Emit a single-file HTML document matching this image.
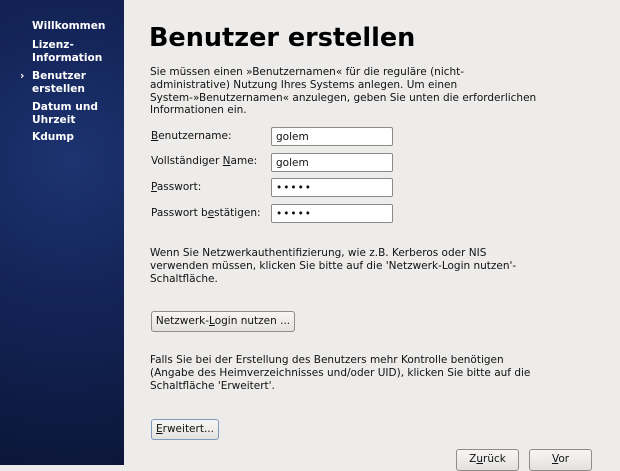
<!DOCTYPE html>
<html><head><meta charset="utf-8"><style>
body{margin:0;width:620px;height:465px;overflow:hidden;background:#edeceb;font-family:"DejaVu Sans","Liberation Sans",sans-serif;font-size:10.5px;color:#111;position:relative}
.sb{position:absolute;left:0;top:0;width:124px;height:465px;background:radial-gradient(circle at 70px 160px,#1d3470 0,#14255a 40%,#0b1638 100%)}
.sb div{position:absolute;left:32px;color:#fff;font-weight:bold;font-size:10.6px;line-height:12.5px;white-space:nowrap}
.a{position:absolute;white-space:nowrap}
.p{position:absolute;left:150px;line-height:12.8px;white-space:nowrap}
.in{position:absolute;left:271px;width:122px;border:1px solid #8a8a88;border-radius:2px;background:#fff;box-sizing:border-box;padding:3px 4px}
.btn{position:absolute;border:1px solid #8e8d8a;border-radius:3px;background:linear-gradient(#f7f6f5,#e4e2df);box-sizing:border-box;text-align:center;line-height:19px}
u{text-decoration:underline}
</style></head><body>
<div class="sb">
<div style="top:20px">Willkommen</div>
<div style="top:39px">Lizenz-<br>Information</div>
<div style="top:70px">Benutzer<br>erstellen</div>
<div style="top:70px;left:20px">›</div>
<div style="top:101px">Datum und<br>Uhrzeit</div>
<div style="top:131px">Kdump</div>
</div>
<div class="a" style="left:149px;top:23px;font-size:25.5px;font-weight:bold;color:#000">Benutzer erstellen</div>
<div class="p" style="top:66px">Sie müssen einen »Benutzernamen« für die reguläre (nicht-<br>administrative) Nutzung Ihres Systems anlegen. Um einen<br>System-»Benutzernamen« anzulegen, geben Sie unten die erforderlichen<br>Informationen ein.</div>
<div class="a" style="left:151px;top:130px"><u>B</u>enutzername:</div>
<div class="a" style="left:151px;top:155px">Vollständiger <u>N</u>ame:</div>
<div class="a" style="left:151px;top:181px"><u>P</u>asswort:</div>
<div class="a" style="left:151px;top:207px">Passwort b<u>e</u>stätigen:</div>
<div class="in" style="top:127px;height:19px">golem</div>
<div class="in" style="top:153px;height:19px">golem</div>
<div class="in" style="top:178px;height:19px;letter-spacing:1px">•••••</div>
<div class="in" style="top:204px;height:19px;letter-spacing:1px">•••••</div>
<div class="p" style="top:247px">Wenn Sie Netzwerkauthentifizierung, wie z.B. Kerberos oder NIS<br>verwenden müssen, klicken Sie bitte auf die 'Netzwerk-Login nutzen'-<br>Schaltfläche.</div>
<div class="btn" style="left:151px;top:311px;width:144px;height:21px">Netzwerk-<u>L</u>ogin nutzen ...</div>
<div class="p" style="top:354px">Falls Sie bei der Erstellung des Benutzers mehr Kontrolle benötigen<br>(Angabe des Heimverzeichnisses und/oder UID), klicken Sie bitte auf die<br>Schaltfläche 'Erweitert'.</div>
<div class="btn" style="left:151px;top:419px;width:68px;height:21px;border-color:#7f97b8"><u>E</u>rweitert...</div>
<div class="btn" style="left:456px;top:449px;width:63px;height:22px">Z<u>u</u>rück</div>
<div class="btn" style="left:529px;top:449px;width:63px;height:22px"><u>V</u>or</div>
</body></html>
